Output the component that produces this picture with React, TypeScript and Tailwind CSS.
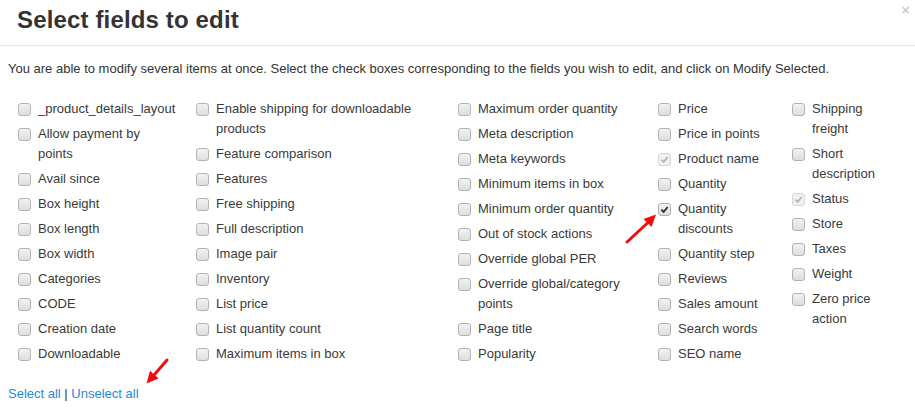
type Field = { label: string; state?: "checked" | "disabled" };

const columns: { width: string; fields: Field[] }[] = [
  {
    width: "w-[178px]",
    fields: [
      { label: "_product_details_layout" },
      { label: "Allow payment by\npoints" },
      { label: "Avail since" },
      { label: "Box height" },
      { label: "Box length" },
      { label: "Box width" },
      { label: "Categories" },
      { label: "CODE" },
      { label: "Creation date" },
      { label: "Downloadable" },
    ],
  },
  {
    width: "w-[262px]",
    fields: [
      { label: "Enable shipping for downloadable\nproducts" },
      { label: "Feature comparison" },
      { label: "Features" },
      { label: "Free shipping" },
      { label: "Full description" },
      { label: "Image pair" },
      { label: "Inventory" },
      { label: "List price" },
      { label: "List quantity count" },
      { label: "Maximum items in box" },
    ],
  },
  {
    width: "w-[200px]",
    fields: [
      { label: "Maximum order quantity" },
      { label: "Meta description" },
      { label: "Meta keywords" },
      { label: "Minimum items in box" },
      { label: "Minimum order quantity" },
      { label: "Out of stock actions" },
      { label: "Override global PER" },
      { label: "Override global/category\npoints" },
      { label: "Page title" },
      { label: "Popularity" },
    ],
  },
  {
    width: "w-[134px]",
    fields: [
      { label: "Price" },
      { label: "Price in points" },
      { label: "Product name", state: "disabled" },
      { label: "Quantity" },
      { label: "Quantity\ndiscounts", state: "checked" },
      { label: "Quantity step" },
      { label: "Reviews" },
      { label: "Sales amount" },
      { label: "Search words" },
      { label: "SEO name" },
    ],
  },
  {
    width: "flex-1",
    fields: [
      { label: "Shipping\nfreight" },
      { label: "Short\ndescription" },
      { label: "Status", state: "disabled" },
      { label: "Store" },
      { label: "Taxes" },
      { label: "Weight" },
      { label: "Zero price\naction" },
    ],
  },
];

function Box({ state }: { state?: Field["state"] }) {
  if (state === "disabled") {
    return (
      <span className="mt-[4px] flex h-[13px] w-[13px] shrink-0 items-center justify-center rounded-[3px] border border-[#d6d6d6] bg-[#f1f1f1]">
        <svg width="9" height="9" viewBox="0 0 10 10">
          <path d="M1.5 5.2 L4 7.6 L8.6 2.2" fill="none" stroke="#b4b4b4" strokeWidth="2" />
        </svg>
      </span>
    );
  }
  return (
    <span className="mt-[4px] flex h-[13px] w-[13px] shrink-0 items-center justify-center rounded-[3px] border border-[#b3b3b3] bg-gradient-to-b from-[#f2f2f2] to-[#dedede]">
      {state === "checked" && (
        <svg width="9" height="9" viewBox="0 0 10 10">
          <path d="M1.5 5.2 L4 7.6 L8.6 2.2" fill="none" stroke="#2e2e2e" strokeWidth="2" />
        </svg>
      )}
    </span>
  );
}

export default function App() {
  return (
    <div className="relative h-[412px] w-[915px] overflow-hidden bg-white font-['Liberation_Sans',Arial,sans-serif] text-[#333]">
      <div className="flex h-[46px] items-start justify-between border-b border-[#e5e5e5] pl-[17px] pr-[5px] pt-[5px]">
        <h1 className="text-[24px] font-bold leading-[30px] tracking-[0.15px] text-[#333]">Select fields to edit</h1>
        <span className="mt-[-3px] text-[15px] font-bold leading-[16px] text-[#d0d0d0]">×</span>
      </div>

      <p className="px-[8px] pt-[13px] text-[13px] leading-[20px]">
        You are able to modify several items at once. Select the check boxes corresponding to the fields you wish to
        edit, and click on Modify Selected.
      </p>

      <div className="flex pl-[18px] pt-[20px]">
        {columns.map((col, i) => (
          <div key={i} className={`${col.width} flex flex-col gap-[5px]`}>
            {col.fields.map((f) => (
              <label key={f.label} className="flex gap-[7px] text-[13px] leading-[20px] text-[#3a3a3a]">
                <Box state={f.state} />
                <span className="whitespace-pre-line">{f.label}</span>
              </label>
            ))}
          </div>
        ))}
      </div>

      <div className="px-[8px] pt-[20px] text-[13px] leading-[20px]">
        <a className="text-[#1f8ad6]">Select all</a> | <a className="text-[#1f8ad6]">Unselect all</a>
      </div>

      <svg className="pointer-events-none absolute left-0 top-0" width="915" height="412">
        <line x1="627" y1="242" x2="648" y2="222.5" stroke="#f20d0d" strokeWidth="3" strokeLinecap="round" />
        <polygon points="656,214.5 651.5,227 643.5,219" fill="#f20d0d" />
        <line x1="167" y1="360" x2="154.5" y2="374.5" stroke="#f20d0d" strokeWidth="3" strokeLinecap="round" />
        <polygon points="146.5,383.5 158.6,378.4 150,370.8" fill="#f20d0d" />
      </svg>
    </div>
  );
}
